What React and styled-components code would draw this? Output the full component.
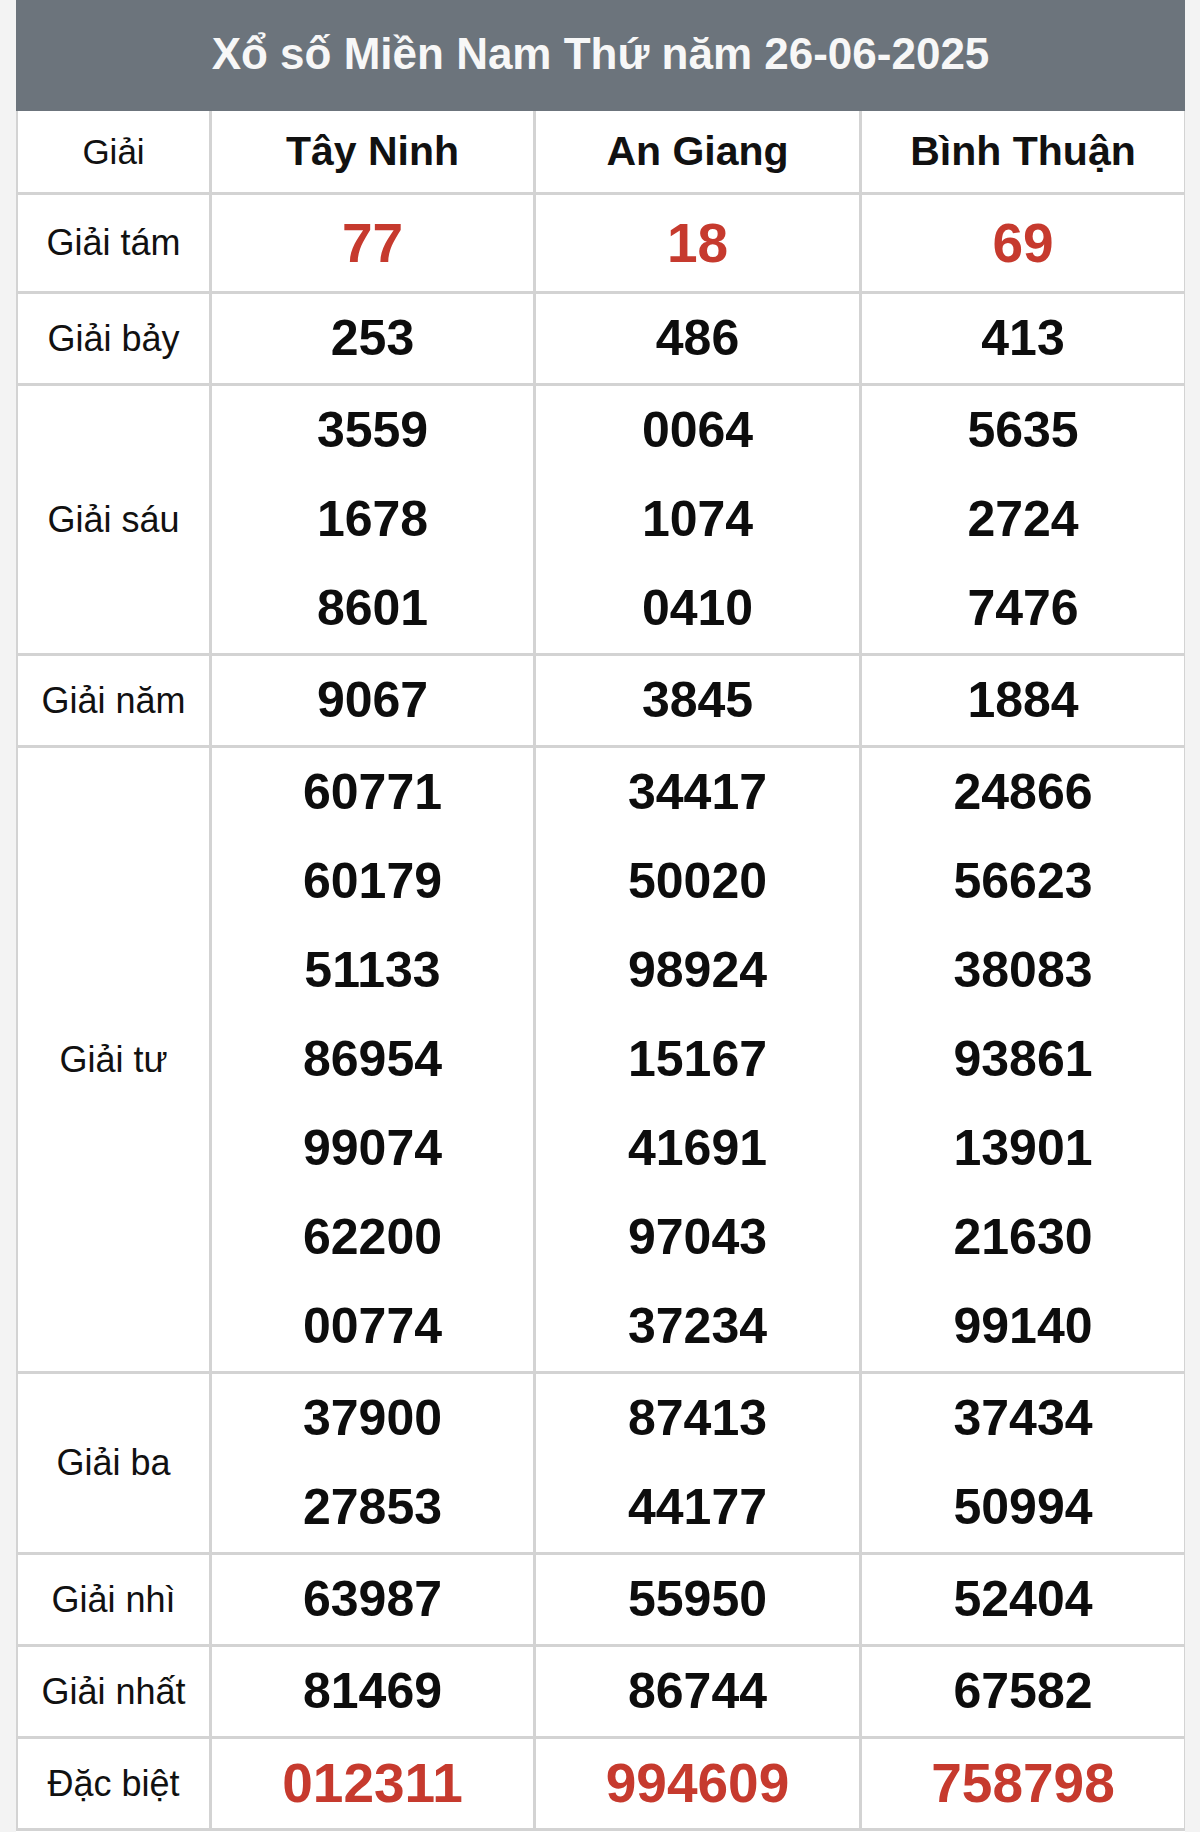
import React from 'react';
import styled, { createGlobalStyle } from 'styled-components';

const GlobalStyle = createGlobalStyle`
  html, body {
    margin: 0;
    padding: 0;
    background: #f3f3f3;
    font-family: "Liberation Sans", Arial, sans-serif;
  }
`;

const stations = ['Tây Ninh', 'An Giang', 'Bình Thuận'];

const prizes = [
    { name: 'Giải tám', red: true, big: true, nums: [['77'], ['18'], ['69']] },
    { name: 'Giải bảy', nums: [['253'], ['486'], ['413']] },
    {
        name: 'Giải sáu',
        nums: [
            ['3559', '1678', '8601'],
            ['0064', '1074', '0410'],
            ['5635', '2724', '7476'],
        ],
    },
    { name: 'Giải năm', nums: [['9067'], ['3845'], ['1884']] },
    {
        name: 'Giải tư',
        nums: [
            ['60771', '60179', '51133', '86954', '99074', '62200', '00774'],
            ['34417', '50020', '98924', '15167', '41691', '97043', '37234'],
            ['24866', '56623', '38083', '93861', '13901', '21630', '99140'],
        ],
    },
    { name: 'Giải ba', nums: [['37900', '27853'], ['87413', '44177'], ['37434', '50994']] },
    { name: 'Giải nhì', nums: [['63987'], ['55950'], ['52404']] },
    { name: 'Giải nhất', nums: [['81469'], ['86744'], ['67582']] },
    { name: 'Đặc biệt', red: true, nums: [['012311'], ['994609'], ['758798']] },
];

const App = () => {
    return (
        <>
            <GlobalStyle />
            <Page>
                <Title>Xổ số Miền Nam Thứ năm 26-06-2025</Title>
                <Table>
                    <colgroup>
                        <col style={{ width: 194 }} />
                        <col style={{ width: 324 }} />
                        <col style={{ width: 326 }} />
                        <col style={{ width: 325 }} />
                    </colgroup>
                    <thead>
                        <tr>
                            <LabelHead>Giải</LabelHead>
                            {stations.map((s) => (
                                <StationHead key={s}>{s}</StationHead>
                            ))}
                        </tr>
                    </thead>
                    <tbody>
                        {prizes.map((p) => (
                            <tr key={p.name}>
                                <Label>{p.name}</Label>
                                {p.nums.map((list, i) => (
                                    <Cell key={i}>
                                        {list.map((n) => (
                                            <Number key={n} $red={p.red} $big={p.big}>
                                                {n}
                                            </Number>
                                        ))}
                                    </Cell>
                                ))}
                            </tr>
                        ))}
                    </tbody>
                </Table>
            </Page>
        </>
    );
};

export default App;

const Page = styled.div`
width: 1169px;
margin-left: 16px;
height: 1832px;
overflow: hidden;
background: #fff;
`;

const Title = styled.div`
height: 111px;
background: #6c747c;
color: #f7f7f7;
font-size: 44px;
font-weight: bold;
display: flex;
align-items: center;
justify-content: center;
padding-bottom: 4px;
box-sizing: border-box;
`;

const Table = styled.table`
width: 1172px;
margin-left: -1px;
border-collapse: collapse;
table-layout: fixed;
color: #111;
`;

const LabelHead = styled.th`
border: 3px solid #d3d3d3;
border-top: none;
height: 81px;
padding: 0;
font-size: 35px;
font-weight: normal;
text-align: center;
`;

const StationHead = styled(LabelHead)`
font-size: 41px;
font-weight: bold;
`;

const Label = styled.td`
border: 3px solid #d3d3d3;
padding: 0;
font-size: 36px;
text-align: center;
vertical-align: middle;
`;

const Cell = styled.td`
border: 3px solid #d3d3d3;
padding: 0;
text-align: center;
vertical-align: middle;
`;

const Number = styled.div`
height: ${(p) => (p.$big ? '96px' : '89px')};
line-height: ${(p) => (p.$big ? '96px' : '89px')};
font-size: ${(p) => (p.$red ? '55px' : '50px')};
font-weight: bold;
color: ${(p) => (p.$red ? '#c63a2e' : '#0d0d0d')};
`;
